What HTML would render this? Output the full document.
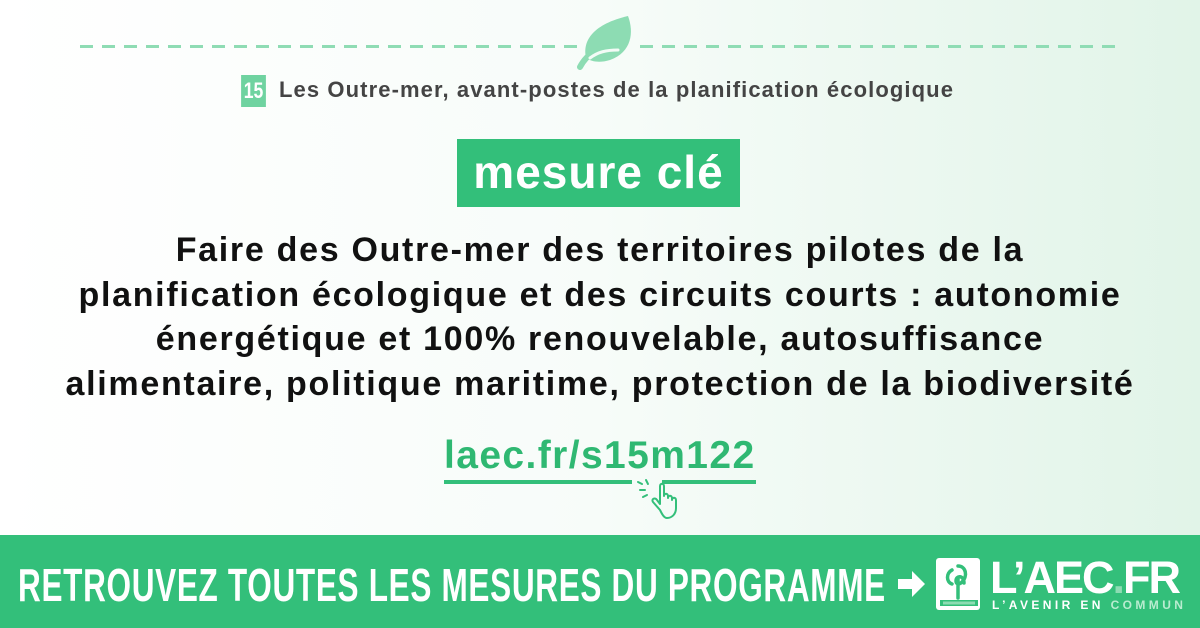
<!DOCTYPE html>
<html><head><meta charset="utf-8"><style>
body{margin:0;width:1200px;height:628px;overflow:hidden;font-family:"Liberation Sans",sans-serif;position:relative;background:linear-gradient(90deg,#ffffff 0%,#f7fcf9 50%,#e1f4e8 100%)}
.dash{position:absolute;top:45px;height:3px;background-image:linear-gradient(90deg,#8fdcb4 60%,transparent 60%);background-size:22px 3px}
.sub{position:absolute;top:75px;left:238px;font-size:22px;font-weight:bold;color:#444;white-space:nowrap;letter-spacing:1.1px}
.num{display:inline-block;background:#6fd3a0;color:#fff;width:31px;height:32px;text-align:center;line-height:32px;margin-right:10px;font-size:22px;vertical-align:middle;letter-spacing:0;transform:scaleX(.8)}
.cle{position:absolute;left:457px;top:139px;width:283px;height:68px;background:#33bf7a;color:#fff;font-size:46px;font-weight:bold;text-align:center;line-height:66px;letter-spacing:1px}
.main{position:absolute;left:0;width:1200px;top:228px;text-align:center;font-size:34px;font-weight:bold;color:#111;line-height:44.5px;letter-spacing:1.7px;white-space:nowrap}
.link{position:absolute;left:444px;top:434px;font-size:39px;font-weight:bold;color:#2fb872;letter-spacing:1.4px}
.ul{position:absolute;top:480px;height:4px;background:#33bf7a}
.bar{position:absolute;left:0;top:535px;width:1200px;height:93px;background:#33bf7a}
.bt{position:absolute;left:18px;top:558px;font-size:46px;font-weight:bold;color:#fff;white-space:nowrap;transform-origin:left top;transform:scaleX(.685);letter-spacing:1px}
</style></head><body>
<div class="dash" style="left:80px;width:500px"></div>
<div class="dash" style="left:640px;width:482px"></div>
<svg style="position:absolute;left:570px;top:12px" width="64" height="58" viewBox="0 0 64 58"><path d="M58 4 C64 20 62 40 40 48 C30 51 22 50 16 46 C12 28 24 12 58 4Z" fill="#8ddcb3"/><path d="M10 55 C18 40 30 35 46 34" stroke="#8ddcb3" stroke-width="6" fill="none" stroke-linecap="round"/><path d="M20 46 C28 40 36 38 48 38" stroke="#f3fbf6" stroke-width="3" fill="none" stroke-linecap="round"/></svg>
<div class="sub"><span class="num">15</span>Les Outre-mer, avant-postes de la planification écologique</div>
<div class="cle">mesure clé</div>
<div class="main">Faire des Outre-mer des territoires pilotes de la<br>planification écologique et des circuits courts : autonomie<br>énergétique et 100% renouvelable, autosuffisance<br>alimentaire, politique maritime, protection de la biodiversité</div>
<div class="link">laec.fr/s15m122</div>
<div class="ul" style="left:444px;width:188px"></div>
<div class="ul" style="left:662px;width:94px"></div>
<svg style="position:absolute;left:636px;top:478px" width="52" height="42" viewBox="0 0 52 42" fill="none" stroke="#33bf7a" stroke-width="2" stroke-linecap="round" stroke-linejoin="round"><path d="M2 4l4 2M4 12h5M7 19l4-2M10 2l2 4"/><path d="M24 32 L17 24 C15 21 19 19 21 22 L24 26 V8 C24 5 28 5 28 8 V18 C28 15 32 15 32 18 V20 C32 17 36 17 36 20 V22 C36 19 40 19 40 22 V30 C40 36 36 40 31 40 C28 40 26 36 24 32Z"/></svg>
<div class="bar"></div>
<div class="bt">RETROUVEZ TOUTES LES MESURES DU PROGRAMME</div>
<svg style="position:absolute;left:898px;top:570px" width="28" height="28" viewBox="0 0 28 28"><path d="M0 9h14V1l13 13-13 13v-8H0z" fill="#fff"/></svg>
<svg style="position:absolute;left:934px;top:556px" width="50" height="56" viewBox="0 0 50 56"><rect x="2" y="2" width="44" height="52" rx="3" fill="#fff"/><rect x="6" y="44" width="38" height="6" fill="#33bf7a"/><rect x="9" y="45.5" width="32" height="3" fill="#8ddcb3"/><path d="M18 14c-6 3-6 12 0 14M24 10c8 0 10 10 4 16-3 3-6 2-6-1 0-6 8-6 8 2M24 22v20" stroke="#33bf7a" stroke-width="3.5" fill="none" stroke-linecap="round"/></svg>
<div style="position:absolute;left:990px;top:554px;font-size:45px;font-weight:900;color:#fff;letter-spacing:-2px;line-height:48px;white-space:nowrap">L’AEC<span style="color:#8ddcb3">.</span>FR</div>
<div style="position:absolute;left:992px;top:598px;font-size:12px;font-weight:bold;color:#fff;letter-spacing:3.4px;white-space:nowrap">L’AVENIR <span>EN</span> <span style="color:#b9ecd0">COMMUN</span></div>
</body></html>
